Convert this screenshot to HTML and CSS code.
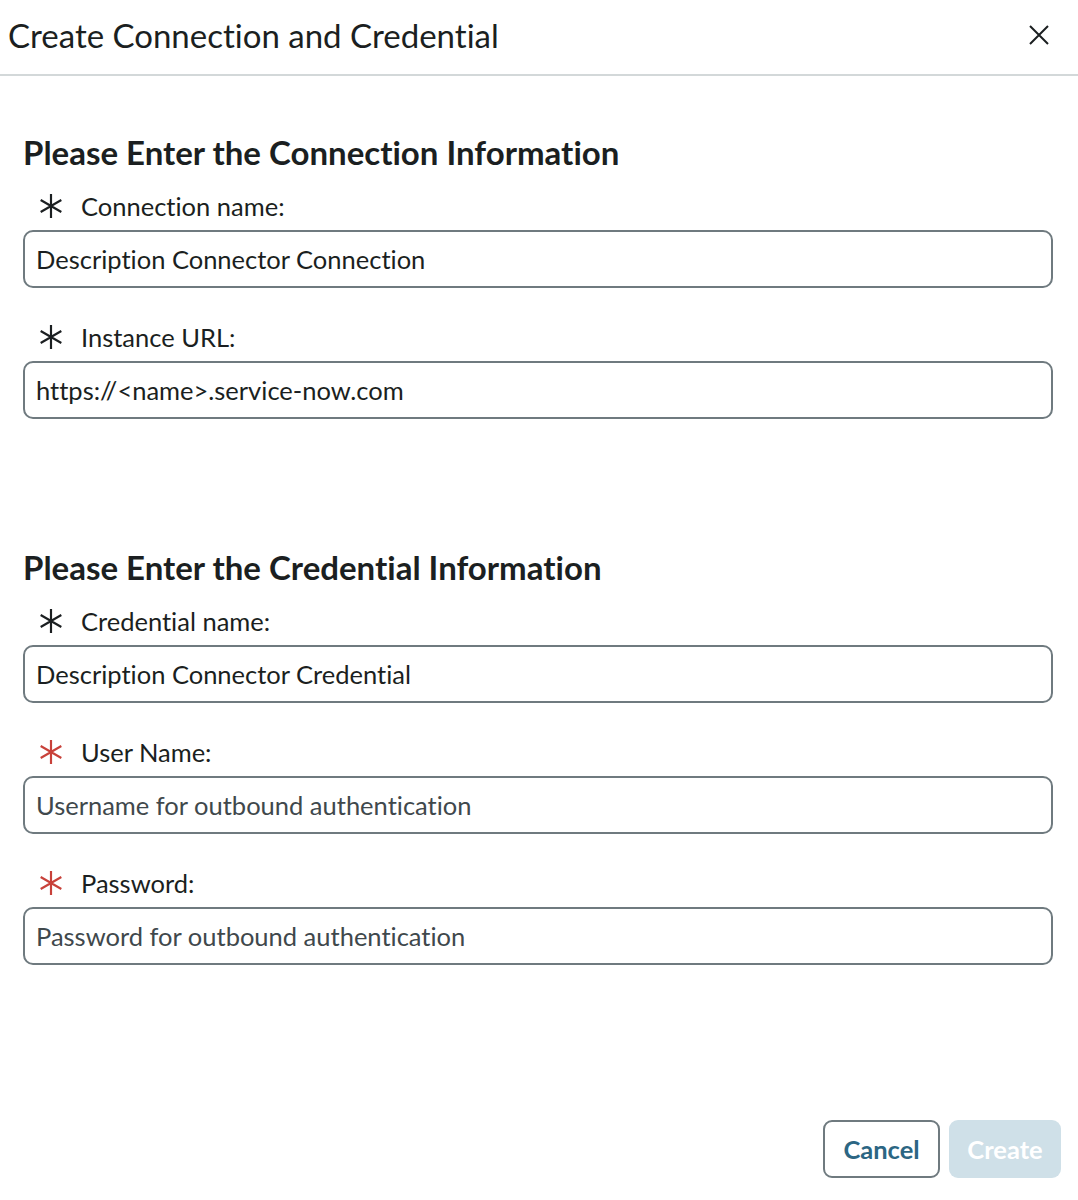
FILE: index.html
```html
<!DOCTYPE html>
<html>
<head>
<meta charset="utf-8">
<link rel="stylesheet" href="styles.css">
</head>
<body>
<div class="dialog">
  <header class="header">
    <h1 class="title">Create Connection and Credential</h1>
    <button class="close" aria-label="Close">
      <svg width="20" height="20" viewBox="0 0 20 20"><path d="M1 1 L19 19 M19 1 L1 19" stroke="#1b1f21" stroke-width="2" fill="none"/></svg>
    </button>
  </header>
  <main class="content">
    <section class="section">
      <h2 class="heading">Please Enter the Connection Information</h2>
      <div class="field">
        <label class="label"><svg class="req" viewBox="0 0 24 24"><path d="M12 1 V23 M2.47 6.5 L21.53 17.5 M2.47 17.5 L21.53 6.5" stroke="currentColor" stroke-width="2" fill="none"/></svg>Connection name:</label>
        <div class="input">Description Connector Connection</div>
      </div>
      <div class="field">
        <label class="label"><svg class="req" viewBox="0 0 24 24"><path d="M12 1 V23 M2.47 6.5 L21.53 17.5 M2.47 17.5 L21.53 6.5" stroke="currentColor" stroke-width="2" fill="none"/></svg>Instance URL:</label>
        <div class="input">https://&lt;name&gt;.service-now.com</div>
      </div>
    </section>
    <section class="section second">
      <h2 class="heading">Please Enter the Credential Information</h2>
      <div class="field">
        <label class="label"><svg class="req" viewBox="0 0 24 24"><path d="M12 1 V23 M2.47 6.5 L21.53 17.5 M2.47 17.5 L21.53 6.5" stroke="currentColor" stroke-width="2" fill="none"/></svg>Credential name:</label>
        <div class="input">Description Connector Credential</div>
      </div>
      <div class="field">
        <label class="label"><svg class="req red" viewBox="0 0 24 24"><path d="M12 1 V23 M2.47 6.5 L21.53 17.5 M2.47 17.5 L21.53 6.5" stroke="currentColor" stroke-width="2" fill="none"/></svg>User Name:</label>
        <div class="input placeholder">Username for outbound authentication</div>
      </div>
      <div class="field">
        <label class="label"><svg class="req red" viewBox="0 0 24 24"><path d="M12 1 V23 M2.47 6.5 L21.53 17.5 M2.47 17.5 L21.53 6.5" stroke="currentColor" stroke-width="2" fill="none"/></svg>Password:</label>
        <div class="input placeholder">Password for outbound authentication</div>
      </div>
    </section>
  </main>
  <footer class="footer">
    <button class="btn cancel">Cancel</button>
    <button class="btn create">Create</button>
  </footer>
</div>
</body>
</html>
```

FILE: styles.css
```css
* { box-sizing: border-box; }
html, body { margin: 0; padding: 0; background: #fff; }
body {
  font-family: Lato, "Open Sans", "Liberation Sans", sans-serif;
  font-variant-ligatures: none;
  color: #1b1f21;
  width: 1078px;
  height: 1200px;
}
.dialog {
  display: flex;
  flex-direction: column;
  height: 1200px;
}
.header {
  display: flex;
  align-items: center;
  justify-content: space-between;
  height: 76px;
  padding: 0 29px 4px 8px;
  border-bottom: 2px solid #d3d8d9;
}
.title {
  margin: 0;
  font-size: 33px;
  font-weight: 400;
  line-height: 40px;
}
.close {
  border: 0;
  background: none;
  padding: 0;
  width: 20px;
  height: 20px;
  display: flex;
}
.content {
  flex: 1;
  padding: 56px 25px 0 23px;
}
.section.second { margin-top: 128px; }
.heading {
  margin: 0 0 16px;
  font-size: 33px;
  font-weight: 700;
  line-height: 40px;
}
.field { margin-bottom: 31px; }
.label {
  display: flex;
  align-items: center;
  padding-left: 15px;
  height: 36px;
  font-size: 25.5px;
  margin-bottom: 6px;
}
.req {
  width: 26px;
  height: 26px;
  margin-right: 17px;
  color: #1b1f21;
}
.req.red { color: #c8413a; }
.input {
  height: 58px;
  border: 2px solid #6f7a7f;
  border-radius: 10px;
  padding: 0 11px;
  display: flex;
  align-items: center;
  font-size: 25.5px;
  color: #1b1f21;
}
.input.placeholder { color: #40484c; }
.footer {
  display: flex;
  justify-content: flex-end;
  gap: 9px;
  padding: 0 17px 22px 0;
}
.btn {
  font-family: inherit;
  font-variant-ligatures: none;
  font-size: 25.5px;
  font-weight: 700;
  height: 58px;
  border-radius: 9px;
  padding: 0 10px;
}
.cancel {
  background: #fff;
  border: 2px solid #6f7a7f;
  color: #2c6683;
  width: 117px;
}
.create {
  background: #cfe0e8;
  border: 0;
  color: #fff;
  width: 112px;
}
```
